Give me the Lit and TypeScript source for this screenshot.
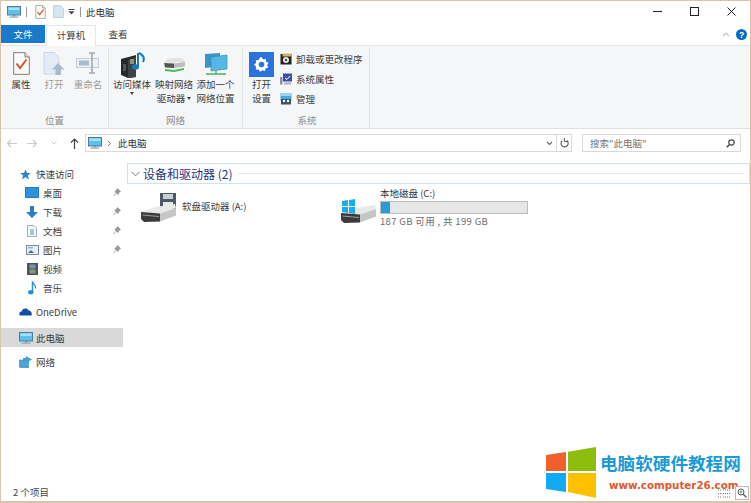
import { LitElement, html, css, svg } from "lit";
import { customElement } from "lit/decorators.js";

const ic = (w: number, h: number, body: unknown, cls = "") =>
  html`<svg class=${cls} width=${w} height=${h} viewBox="0 0 ${w} ${h}">${body}</svg>`;

const pc = () => ic(14, 12, svg`
  <rect x=".5" y=".5" width="13" height="8.5" fill="#5cc0ea" stroke="#4a7f9c"/>
  <rect x="1.5" y="1.5" width="11" height="2.5" fill="#a8e0f6"/>
  <rect x="5.5" y="9" width="3" height="1.5" fill="#7f98a8"/>
  <rect x="2.5" y="10.5" width="9" height="1.2" fill="#8fa4b2"/>`);

const checkDoc = (w: number, h: number) => html`<svg width=${w} height=${h} viewBox="0 0 17 23">
  <path d="M.7.7H12L16.3 5V22.3H.7Z" fill="#fbfbfb" stroke="#8a7a6a"/>
  <path d="M12 .7V5H16.3" fill="#e8e8e8" stroke="#8a7a6a"/>
  <path d="M3.5 11.5L7 16L13.5 7.5" fill="none" stroke="#d9562b" stroke-width="2"/></svg>`;

const blankDoc = ic(11, 13, svg`<path d="M.5.5H7.5L10.5 3.5V12.5H.5Z" fill="#d9e4f2" stroke="#c3d2e4"/>`);

const hddParts = svg`
  <path d="M0 8L14 3L34 0L35 4L19 9.500L2 8.500Z" fill="#e9e9e9"/>
  <path d="M19 9.500L35 4V11.500L19 17.500Z" fill="#c6c6c6"/>
  <path d="M0 8L19 9.500V17.500L3 18L0 15Z" fill="#3b3b3b"/>
  <path d="M1.500 11L18 12.500" stroke="#9a9a9a" stroke-width="1.2"/>`;

@customElement("app-root")
export class AppRoot extends LitElement {
  static styles = css`
    :host {
      display: block; width: 751px; height: 503px;
      font: 9.5px "Noto Sans CJK SC", "Noto Sans", sans-serif; color: #3c3c3c;
    }
    * { box-sizing: border-box; }
    svg { display: block; flex: none; }
    .win {
      position: relative; width: 751px; height: 503px; background: #fff;
      border: 1px solid #d9c4ab; border-bottom-width: 2px;
      display: flex; flex-direction: column; overflow: hidden;
    }
    .title { height: 23px; display: flex; align-items: center; padding: 0 0 2px 6px; flex: none; }
    .title .sep { width: 1px; height: 10px; background: #9a9a9a; }
    .sep1 { margin: 0 8px 0 5px; }
    .sep2 { margin: 0 5px 0 5px; }
    .blank { margin: 0 4px 0 7px; }
    .name { color: #333; font-size: 9.5px; }
    .ctrls { margin-left: auto; display: flex; align-items: center; padding-right: 14px; gap: 28px; }
    .tabs { height: 21px; display: flex; flex: none; align-items: flex-end; }
    .tab { height: 20px; display: flex; align-items: center; justify-content: center; }
    .file { width: 44px; height: 18px; margin-bottom: 2px; background: #1979ca; color: #fff; }
    .cur { width: 50px; height: 21px; margin-left: 1px; background: #fff; border: 1px solid #e6e6e6; border-bottom: 0; padding-bottom: 2px; position: relative; top: 1px; }
    .view { width: 44px; padding-bottom: 2px; }
    .help { margin-left: auto; display: flex; align-items: center; gap: 6px; padding: 0 3px 5px 0; }
    .ribbon { height: 84px; flex: none; background: #f5f6f7; display: flex; border-top: 1px solid #e6e6e6; border-bottom: 1px solid #e0e0e0; }
    .group { display: flex; flex-direction: column; border-right: 1px solid #e4e5e6; padding-left: 3px; margin-top: 1px; height: 81px; }
    .g1 { width: 108px; }
    .g2 { width: 134px; }
    .g3 { width: 127px; padding-left: 5px; }
    .items { flex: 1; display: flex; }
    .glabel { height: 17px; margin-left: -3px; text-align: center; color: #8d8d8d; font-size: 9.5px; line-height: 18px; }
    .big { display: flex; flex-direction: column; align-items: center; padding-top: 5px; line-height: 13.5px; text-align: center; }
    .ico { height: 26px; display: flex; align-items: flex-start; justify-content: center; }
    .b1 { width: 34px; } .b2 { width: 32px; } .b3 { width: 36px; }
    .b4 { width: 40px; } .b5 { width: 44px; } .b6 { width: 39px; }
    .b7 { width: 27px; }
    .dis { color: #9b9b9b; }
    .caret { display: inline-block; vertical-align: middle; width: 0; height: 0; border: 2.5px solid transparent; border-top: 3px solid #444; border-bottom: 0; }
    .small { margin: 4px 0 0 5px; display: flex; flex-direction: column; gap: 5px; }
    .srow { display: flex; align-items: center; gap: 4px; height: 15px; }
    .addr { height: 28px; flex: none; display: flex; align-items: center; padding: 0 9px 0 0; }
    .nav { width: 84px; display: flex; align-items: center; }
    .navb { display: flex; width: 22px; justify-content: center; }
    .box { height: 18px; border: 1px solid #d9d9d9; display: flex; align-items: center; }
    .path { width: 472px; padding: 0 3px 0 2px; gap: 5px; }
    .crumb { margin-left: 1px; color: #333; }
    .dd { margin-left: auto; }
    .ref { width: 16px; margin-left: -1px; justify-content: center; }
    .search { width: 159px; margin-left: 10px; padding: 0 5px 0 7px; color: #777; justify-content: space-between; }
    .body { flex: 1; display: flex; min-height: 0; }
    .side { width: 122px; padding-top: 8px; flex: none; }
    .row { height: 19px; display: flex; align-items: center; position: relative; color: #3c3c3c; }
    .first { height: 18px; }
    .l1 { padding-left: 18px; gap: 4px; }
    .l1 .i { width: 13px; display: flex; justify-content: center; }
    .l2 { padding-left: 24px; gap: 4px; }
    .l2 .i { width: 14px; display: flex; justify-content: center; }
    .pin { margin-left: auto; margin-right: 2px; }
    .gap { height: 5px; }
    .sel { background: #d9d9d9; margin-top: 7px; margin-bottom: 5px; }
    .main { flex: 1; padding: 6px 0 0 4px; min-width: 0; }
    .ghead { height: 21px; border: 1px solid #cfe2ee; display: flex; align-items: center; padding-left: 3px; color: #1e3287; font-size: 12px; }
    .ghead .chev { margin-right: 3px; }
    .ghead .line { flex: 1; height: 1px; background: #e3e9ef; margin: 0 4px 0 6px; }
    .drives { display: flex; padding-left: 14px; }
    .drive { display: flex; align-items: flex-start; }
    .da { width: 200px; padding-top: 9px; gap: 5px; }
    .da span { margin-top: 7px; line-height: 13px; }
    .db { gap: 4px; padding-top: 3px; }
    .db svg { margin-top: 12px; }
    .dinfo { display: flex; flex-direction: column; }
    .dname { line-height: 13px; color: #333; }
    .bar { width: 148px; height: 13px; margin: 1px 0 1px; background: #e6e6e6; border: 1px solid #bcbcbc; }
    .fill { height: 100%; background: #2b9bd6; }
    .dsub { color: #6d6d6d; line-height: 13px; letter-spacing: .35px; }
    .status { height: 19px; flex: none; display: flex; align-items: center; padding-left: 12px; color: #444; }
    .views { position: absolute; right: 1px; bottom: 1px; display: flex; gap: 5px; align-items: center; z-index: 2; }
    .zoom { background: #fff; border: 1px solid #bbb; padding: 1px; }
    .mark { position: absolute; left: 544px; top: 443px; width: 205px; height: 55px; background: #fff; display: flex; align-items: center; gap: 3px; z-index: 1; }
    .mtext { display: flex; flex-direction: column; margin-bottom: 2px; }
    .m1 { color: #1b9ad8; font-size: 17.6px; font-weight: 700; line-height: 26px; white-space: nowrap; }
    .m2 { color: #e0582b; font: 700 10.3px "DejaVu Sans", sans-serif; line-height: 14px; margin: 2px 0 0 9px; white-space: nowrap; }
  `;

  render() {
    const pin = ic(8, 9, svg`<path d="M4.5.5L7.5 3.5L6 4.2L5 6.5L1.8 3.5L3.8 2ZM3 5.2L.5 8.2" fill="#9a9a9a" stroke="#8a8a8a" stroke-width=".7"/>`, "pin");
    const chevR = ic(5, 7, svg`<path d="M1 1L3.5 3.5L1 6" fill="none" stroke="#777"/>`);
    const chevD = ic(7, 5, svg`<path d="M1 1L3.5 3.5L6 1" fill="none" stroke="#666" stroke-width="1.1"/>`);
    return html`
      <div class="win">
        <div class="title">
          ${pc()}
          <span class="sep sep1"></span>
          ${checkDoc(11, 14)}
          <span class="blank">${blankDoc}</span>
          ${ic(7, 6, svg`<path d="M.5.5H6.5" stroke="#444"/><path d="M.5 2.2H6.5L3.5 5.5Z" fill="#444"/>`)}
          <span class="sep sep2"></span>
          <span class="name">此电脑</span>
          <div class="ctrls">
            ${ic(9, 9, svg`<path d="M0 4.5H9" stroke="#222"/>`)}
            ${ic(9, 9, svg`<rect x=".5" y=".5" width="8" height="8" fill="none" stroke="#222"/>`)}
            ${ic(9, 9, svg`<path d="M.5.5L8.5 8.5M8.5.5L.5 8.5" stroke="#222"/>`)}
          </div>
        </div>
        <div class="tabs">
          <div class="tab file">文件</div>
          <div class="tab cur">计算机</div>
          <div class="tab view">查看</div>
          <div class="help">
            ${ic(8, 5, svg`<path d="M1 4L4 1L7 4" fill="none" stroke="#c4c4c4" stroke-width="1.2"/>`)}
            ${ic(11, 11, svg`<circle cx="5.5" cy="5.5" r="5.5" fill="#0a6cc0"/><text x="5.5" y="8.6" text-anchor="middle" font-size="8.5" font-weight="700" font-family="Liberation Sans" fill="#fff">?</text>`)}
          </div>
        </div>
        <div class="ribbon">
          <div class="group g1">
            <div class="items">
              <div class="big b1"><div class="ico">${checkDoc(17, 23)}</div>属性</div>
              <div class="big b2 dis"><div class="ico">${ic(22, 24, svg`
                <path d="M1 .5H11L16 5.5V22H1Z" fill="#e3ebf6" stroke="#ccd6e4"/>
                <path d="M15 11L21.5 17.5H18V23H12.5V17.5H9Z" fill="#a9b9cd"/>`)}</div>打开</div>
              <div class="big b3 dis"><div class="ico">${ic(24, 22, svg`
                <rect x=".5" y="6.5" width="22" height="9" fill="#eef1f5" stroke="#c6ced8"/>
                <rect x="3" y="8.5" width="10" height="5" fill="#a9bccf"/>
                <path d="M13 1H19M16 1V21M13 21H19" fill="none" stroke="#a4a9ae" stroke-width="1.6"/>`)}</div>重命名</div>
            </div>
            <div class="glabel">位置</div>
          </div>
          <div class="group g2">
            <div class="items">
              <div class="big b4"><div class="ico">${ic(25, 26, svg`
                <path d="M1 7L16 3V25L8 26L1 23Z" fill="#25282c"/>
                <path d="M8 8L16 5V25L8 26Z" fill="#3e4348"/>
                <rect x="10" y="7" width="4" height="5" fill="#8a9a6a"/>
                <rect x="3" y="12" width="3" height="7" fill="#555"/>
                <path d="M18 1V14.5" stroke="#1579c8" stroke-width="2"/>
                <ellipse cx="15.5" cy="15" rx="3.5" ry="2.8" fill="#1579c8"/>
                <path d="M19 1C23 3 25 6 23 10" fill="none" stroke="#1579c8" stroke-width="2"/>`)}</div>访问媒体<span class="caret"></span></div>
              <div class="big b5"><div class="ico">${ic(24, 24, svg`
                <path d="M5 7L12 6H20L23 10L2 11Z" fill="#e2e2e2"/>
                <path d="M2 11L12 11.500V16L3 15.500Z" fill="#555"/>
                <path d="M12 11.500L23 10V14.500L12 16Z" fill="#bdbdbd"/>
                <path d="M3 17L12 18L22 16V18L12 20L3 19Z" fill="#4cbb5a"/>`)}</div>映射网络<span>驱动器 <span class="caret"></span></span></div>
              <div class="big b6"><div class="ico">${ic(24, 24, svg`
                <path d="M1 2L16 1V14L1 16Z" fill="#3f93c9"/>
                <path d="M7 5L23 3V17L7 19Z" fill="#56b8e2" stroke="#3680ad" stroke-width=".6"/>
                <path d="M12 19V21M2 22H22" stroke="#4cab5a" stroke-width="1.4"/>`)}</div>添加一个<span>网络位置</span></div>
            </div>
            <div class="glabel">网络</div>
          </div>
          <div class="group g3">
            <div class="items">
              <div class="big b7"><div class="ico">${ic(25, 25, svg`
                <rect width="25" height="25" fill="#2a73dc"/>
                <path d="M12.5 5L14 7.4L16.8 6.8L17 9.6L19.6 10.9L18 13L19.4 15.4L16.7 16.3L16 19L13.4 18.2L11 19.8L9.6 17.4L6.8 17.4L7 14.6L5 12.8L7 11L6.9 8.2L9.6 8L11 5.4Z" fill="#fff"/>
                <circle cx="12.5" cy="12.5" r="2.8" fill="#2a73dc"/>`)}</div>打开<span>设置</span></div>
              <div class="small">
                <div class="srow">${ic(12, 12, svg`<rect x=".5" y="1" width="11" height="10.5" fill="#222"/><rect x="2.5" y=".5" width="9" height="3" fill="#d8b06a"/><circle cx="6" cy="7" r="3" fill="#eee"/><circle cx="6" cy="7" r="1.2" fill="#444"/>`)}卸载或更改程序</div>
                <div class="srow">${ic(12, 12, svg`<rect x="3" y=".5" width="9" height="8" fill="#3c4fa8"/><path d="M5 5L7 6.5L10 3" fill="none" stroke="#fff"/><rect x="0" y="4" width="2.5" height="7.5" fill="#8a8fa8"/><rect x="4" y="9.5" width="7" height="2" fill="#aab"/>`)}系统属性</div>
                <div class="srow">${ic(12, 12, svg`<rect x=".5" y=".5" width="11" height="7" fill="#4aa8dc"/><rect x="1" y="1" width="10" height="2" fill="#9cd4f0"/><rect x="1" y="6" width="10" height="5.5" fill="#39516a"/><circle cx="4" cy="8" r="1.2" fill="#fff"/><circle cx="8" cy="8" r="1.2" fill="#fff"/>`)}管理</div>
              </div>
            </div>
            <div class="glabel">系统</div>
          </div>
        </div>
        <div class="addr">
          <div class="nav">
            <span class="navb">${ic(11, 9, svg`<path d="M5 1L1.5 4.5L5 8M1.5 4.5H11" fill="none" stroke="#c9c9c9" stroke-width="1.2"/>`)}</span>
            <span class="navb">${ic(11, 9, svg`<path d="M6 1L9.5 4.5L6 8M9.5 4.5H0" fill="none" stroke="#c9c9c9" stroke-width="1.2"/>`)}</span>
            <span class="navb">${ic(6, 4, svg`<path d="M.5.5L3 3L5.5.5" fill="none" stroke="#d0d0d0"/>`)}</span>
            <span class="navb">${ic(9, 11, svg`<path d="M1 4.5L4.5 1L8 4.5M4.5 1V11" fill="none" stroke="#444" stroke-width="1.2"/>`)}</span>
          </div>
          <div class="box path">${pc()}${chevR}<span class="crumb">此电脑</span><span class="dd">${chevD}</span></div>
          <div class="box ref">${ic(9, 10, svg`<path d="M6.8 2.4A3.6 3.6 0 1 1 2.2 2.6" fill="none" stroke="#555" stroke-width="1.1"/><path d="M4.4 0V3.6H8" fill="none" stroke="#555"/>`)}</div>
          <div class="box search"><span>搜索"此电脑"</span>${ic(9, 9, svg`<circle cx="5.5" cy="3.5" r="2.7" fill="none" stroke="#444" stroke-width="1.2"/><path d="M3.5 5.5L.8 8.2" stroke="#444" stroke-width="1.5"/>`)}</div>
        </div>
        <div class="body">
          <div class="side">
            <div class="row l1 first"><span class="i">${ic(11, 11, svg`<path d="M5.5.5L7 4H10.8L7.8 6.4L9 10.5L5.5 8L2 10.5L3.2 6.4L.2 4H4Z" fill="#2f7fce"/>`)}</span>快速访问</div>
            <div class="row l2"><span class="i">${ic(14, 11, svg`<rect x=".5" y=".5" width="13" height="10" fill="#2a93dd" stroke="#2a78b8"/>`)}</span>桌面${pin}</div>
            <div class="row l2"><span class="i">${ic(12, 12, svg`<path d="M4 0H8V6H12L6 12L0 6H4Z" fill="#2c7cd0"/>`)}</span>下载${pin}</div>
            <div class="row l2"><span class="i">${ic(10, 12, svg`<path d="M.5.5H7L9.5 3V11.5H.5Z" fill="#f4f7fa" stroke="#9db0c0"/><path d="M3 5H7M3 7H7M3 9H7" stroke="#5a9a9a"/>`)}</span>文档${pin}</div>
            <div class="row l2"><span class="i">${ic(13, 10, svg`<rect x=".5" y=".5" width="12" height="9" fill="#e8eef4" stroke="#7a8a9a"/><path d="M2 8L5 5L8 8Z" fill="#4a6a8a"/><rect x="2" y="2" width="5" height="1.5" fill="#8fb0cc"/>`)}</span>图片${pin}</div>
            <div class="row l2"><span class="i">${ic(11, 12, svg`<rect width="11" height="12" fill="#4a5560"/><rect x="2.5" y="1.5" width="6" height="4" fill="#7d93a5"/><rect x="2.5" y="6.5" width="6" height="4" fill="#8a9a6a"/>`)}</span>视频</div>
            <div class="row l2"><span class="i">${ic(9, 14, svg`<path d="M4.5.5V11" stroke="#1e96d6" stroke-width="1.5"/><ellipse cx="2.8" cy="11.2" rx="2.7" ry="2.2" fill="#1e96d6"/><path d="M4.5.5C5 3.5 8.5 4 7.5 7.5" fill="none" stroke="#1e96d6" stroke-width="1.3"/>`)}</span>音乐</div>
            <div class="gap"></div>
            <div class="row l1"><span class="i">${ic(13, 9, svg`<path d="M1 8.5C-.5 6.5 .5 4.8 2.5 4.5C3.5 1 8 .5 9.5 3.5C12 3.2 13.5 6.5 12.5 8.5Z" fill="#0f4fa6"/>`)}</span>OneDrive</div>
            <div class="row l1 sel"><span class="i">${pc()}</span>此电脑</div>
            <div class="row l1"><span class="i">${ic(13, 12, svg`<rect x=".5" y="4" width="9" height="7" fill="#4aa8dc" stroke="#3a86b8" stroke-width=".6"/><path d="M7 0L13 3.5L7 7V5H4V2H7Z" fill="#3f9ed8"/><path d="M1 11.5H10" stroke="#6fa0bc"/>`)}</span>网络</div>
          </div>
          <div class="main">
            <div class="ghead">
              <span class="chev">${ic(9, 6, svg`<path d="M.5.8L4.5 4.8L8.5.8" fill="none" stroke="#6a7f92"/>`)}</span>
              设备和驱动器 (2)
              <span class="line"></span>
            </div>
            <div class="drives">
              <div class="drive da">
                ${ic(36, 30, svg`
                  <rect x="19" y="0" width="16" height="16" fill="#4d5a66"/>
                  <rect x="22" y="1" width="10" height="5" fill="#c9ced2"/>
                  <rect x="22" y="9" width="10" height="7" fill="#e6e8ea"/>
                  <g transform="translate(0 11)">${hddParts}</g>`)}
                <span>软盘驱动器 (A:)</span>
              </div>
              <div class="drive db">
                ${ic(35, 24, svg`
                  <g transform="translate(0 6)">${hddParts}</g>
                  <path d="M1 1L7 0V6H1ZM8 0L14 -1V6H8ZM1 7H7V13L1 12ZM8 7H14V14L8 13Z" fill="#19aee8" transform="translate(0 1)"/>`)}
                <div class="dinfo">
                  <span class="dname">本地磁盘 (C:)</span>
                  <div class="bar"><div class="fill" style="width:${(12 / 199) * 100}%"></div></div>
                  <span class="dsub">187 GB 可用 , 共 199 GB</span>
                </div>
              </div>
            </div>
          </div>
        </div>
        <div class="status">2 个项目</div>
        <div class="mark">
          ${ic(52, 52, svg`
            <path d="M1 9L21 6V25H1Z" fill="#f0602a"/>
            <path d="M23 5.700L51 1V25H23Z" fill="#8fbd0f"/>
            <path d="M1 27H21V46L1 43Z" fill="#12aaf0"/>
            <path d="M23 27H51V52L23 46Z" fill="#ffc000"/>`)}
          <div class="mtext">
            <span class="m1">电脑软硬件教程网</span>
            <span class="m2">www.computer26.com</span>
          </div>
        </div>
        <div class="views">
          ${ic(12, 9, svg`<path d="M0 1H3M0 4.500H3M0 8H3M5 1H12M5 4.500H12M5 8H12" stroke="#777" stroke-dasharray="1 1"/>`)}
          <span class="zoom">${ic(10, 10, svg`<circle cx="4" cy="4" r="3" fill="none" stroke="#555"/><path d="M6 6L9.500 9.500" stroke="#555" stroke-width="1.3"/><path d="M2.500 4H5.500M4 2.500V5.500" stroke="#555" stroke-width=".7"/>`)}</span>
        </div>
      </div>
    `;
  }
}
